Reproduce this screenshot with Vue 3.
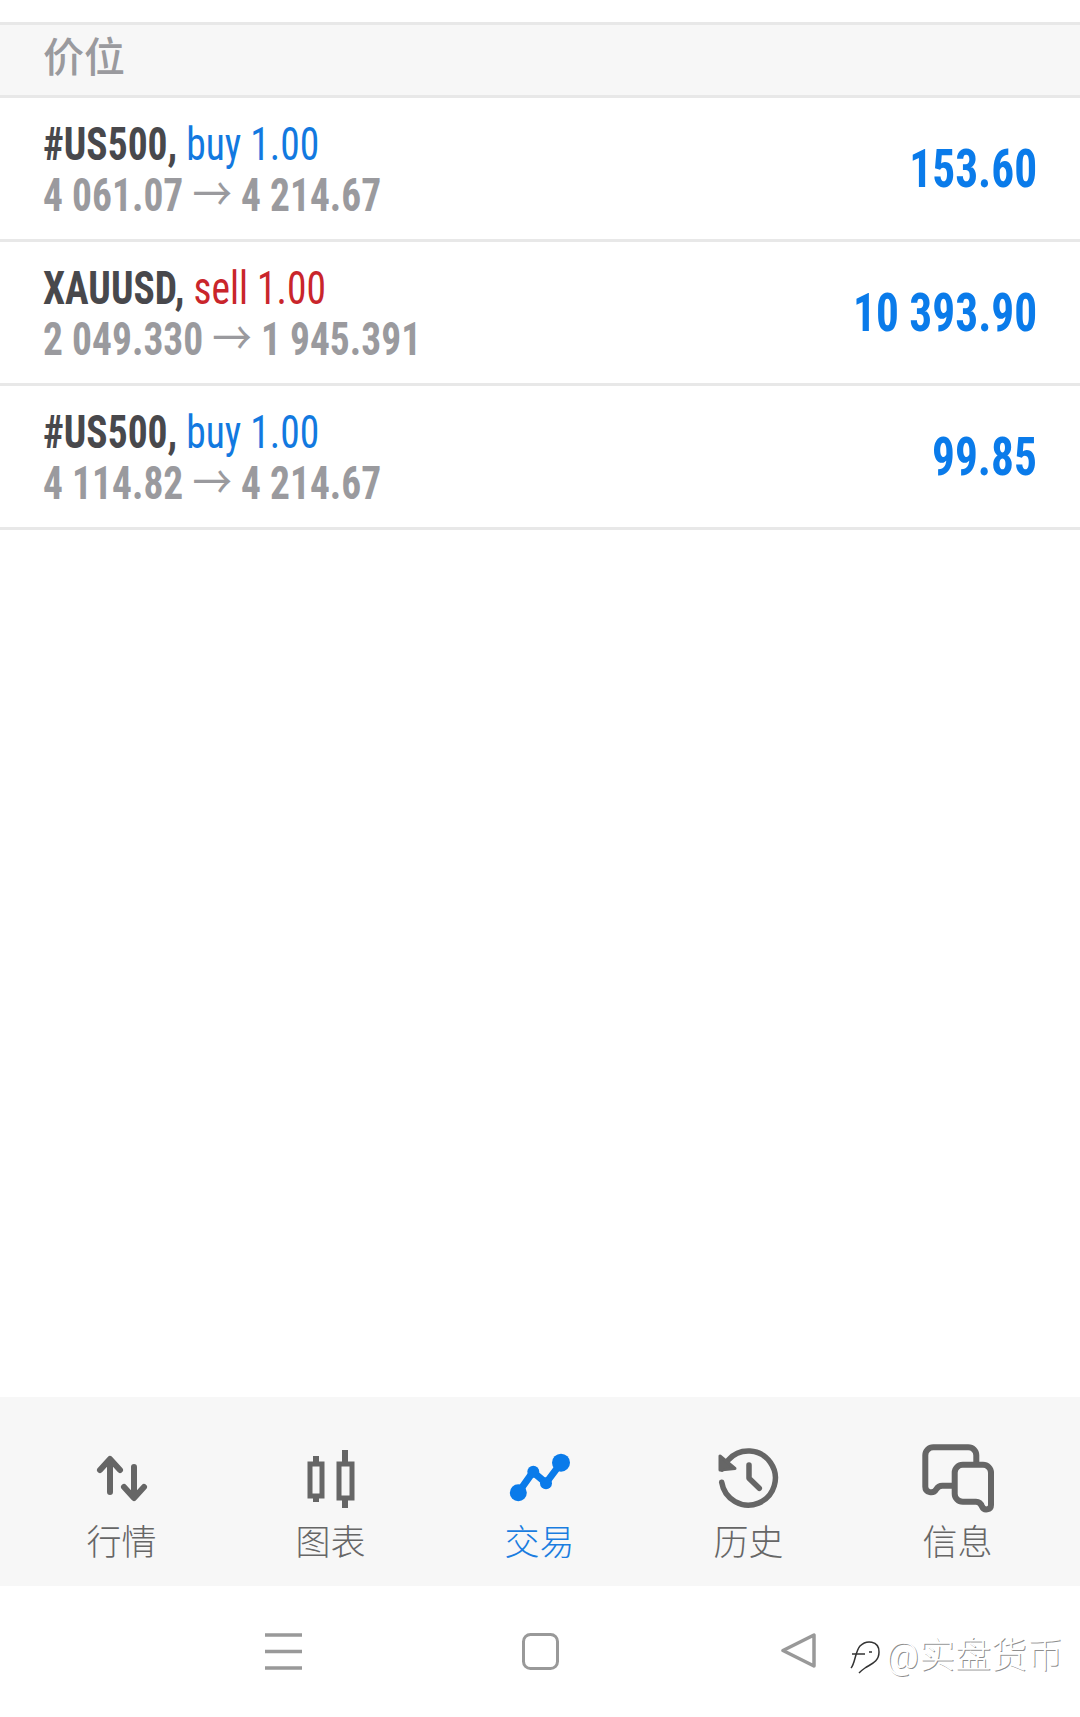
<template>
  <div class="screen">
    <div class="header">价位</div>
    <div class="list">
      <div v-for="(t, i) in trades" :key="i" class="row">
        <div class="info">
          <div class="title"><b>{{ t.symbol }},</b> <span :class="t.side">{{ t.side }} {{ t.volume }}</span></div>
          <div class="prices">{{ t.open }} <span class="arrow">→</span> {{ t.close }}</div>
        </div>
        <div class="profit">{{ t.profit }}</div>
      </div>
    </div>

    <div class="tabs">
      <div v-for="tab in tabs" :key="tab.label" class="tab" :class="{ active: tab.active }">
        <svg v-if="tab.id === 'quotes'" class="icon" viewBox="0 0 100 80" fill="none" stroke="#666" stroke-width="6" stroke-linecap="round" stroke-linejoin="round">
          <path d="M38 52V20M28 30l10-11 10 11" />
          <path d="M62 27V57M52 47l10 11 10-11" />
        </svg>
        <svg v-else-if="tab.id === 'charts'" class="icon" viewBox="0 0 100 80" fill="#666">
          <rect x="32" y="16" width="6" height="46" />
          <rect x="61" y="10" width="6" height="58" />
          <rect x="29" y="24" width="12" height="32" fill="#f7f7f7" stroke="#666" stroke-width="5" />
          <rect x="58" y="24" width="13" height="34" fill="#f7f7f7" stroke="#666" stroke-width="5" />
          <rect x="33" y="27" width="4" height="26" fill="#f7f7f7" />
        </svg>
        <svg v-else-if="tab.id === 'trade'" class="icon" viewBox="-8 0 100 80" fill="#0a7bea">
          <path d="M20 53L35 32L48 43L63 23" fill="none" stroke="#0a7bea" stroke-width="7" />
          <circle cx="20.3" cy="52.7" r="8.5" />
          <circle cx="35.3" cy="31.7" r="6" />
          <circle cx="48" cy="43.3" r="6" />
          <circle cx="63" cy="22.7" r="9" />
        </svg>
        <svg v-else-if="tab.id === 'history'" class="icon" viewBox="-4 0 100 80" fill="none" stroke="#666" stroke-width="5.5" stroke-linecap="round" stroke-linejoin="round">
          <path d="M18.7 42.3A27 27 0 1 0 25.3 20L19 29" />
          <path d="M17 16V30L32 28.5Z" fill="#666" stroke-width="3" />
          <path d="M46 25V38.3L56.3 48.3" />
        </svg>
        <svg v-else class="icon" viewBox="4 0 100 80" fill="none" stroke="#666" stroke-width="6" stroke-linecap="round" stroke-linejoin="round">
          <path d="M72.3 23V15.3a8 8 0 0 0-8-8H29.3a8 8 0 0 0-8 8V46.7c0 6 8 7.500 11 2.500c1.500-2.500 3-3.500 6-3.500H49.300" />
          <path d="M58.7 24.700H79a8 8 0 0 1 8 8V65c0 5-7 6-9 1.500c-1-3-2.500-4.800-6-4.800H58.700a8 8 0 0 1-8-8V32.700a8 8 0 0 1 8-8Z" />
        </svg>
        <span class="label">{{ tab.label }}</span>
      </div>
    </div>

    <div class="nav">
      <svg class="nav-menu" width="37" height="37" viewBox="0 0 37 37" stroke="#999" stroke-width="3.500">
        <path d="M0 2H37M0 18.500H37M0 35H37" />
      </svg>
      <svg class="nav-home" width="37" height="37" viewBox="0 0 37 37" fill="none" stroke="#999" stroke-width="3">
        <rect x="1.500" y="1.500" width="34" height="34" rx="7" />
      </svg>
      <svg class="nav-back" width="36" height="36" viewBox="0 0 36 36" fill="none" stroke="#999" stroke-width="3.500" stroke-linejoin="round">
        <path d="M33 2V33L2 17.500Z" />
      </svg>
      <div class="mark">
        <svg width="36" height="36" viewBox="0 0 36 36" fill="none" stroke="#333" stroke-width="1.500">
          <path d="M6 30C10 26 10 14 15 8C21 2 34 2 34 14C34 24 26 26 20 30C17 32 15 34 14 35" />
          <path d="M7 16H20M24 14H27" />
        </svg>
        <span>@实盘货币</span>
      </div>
    </div>
  </div>
</template>

<script setup>
const trades = [
  { symbol: '#US500', side: 'buy', volume: '1.00', open: '4 061.07', close: '4 214.67', profit: '153.60' },
  { symbol: 'XAUUSD', side: 'sell', volume: '1.00', open: '2 049.330', close: '1 945.391', profit: '10 393.90' },
  { symbol: '#US500', side: 'buy', volume: '1.00', open: '4 114.82', close: '4 214.67', profit: '99.85' }
];

const tabs = [
  { id: 'quotes', label: '行情' },
  { id: 'charts', label: '图表' },
  { id: 'trade', label: '交易', active: true },
  { id: 'history', label: '历史' },
  { id: 'messages', label: '信息' }
];
</script>

<style>
body {
  background: #fff;
}
</style>

<style scoped>
.screen {
  width: 1080px;
  height: 1717px;
  display: flex;
  flex-direction: column;
  overflow: hidden;
  background: #fff;
  font-family: Roboto, "Noto Sans CJK SC", sans-serif;
}
.header {
  margin-top: 22px;
  height: 70px;
  padding-left: 43px;
  line-height: 66px;
  font-size: 41px;
  font-weight: 500;
  color: #9a9a9e;
  background: #f7f7f7;
  border-top: 3px solid #e8e8e8;
  border-bottom: 3px solid #e8e8e8;
}
.list {
  flex: 1;
}
.row {
  height: 141px;
  padding: 16px 43px 0;
  display: flex;
  justify-content: space-between;
  align-items: center;
  box-sizing: content-box;
  height: 125px;
  border-bottom: 3px solid #e8e8e8;
  font-stretch: condensed;
}
.info {
  transform: scaleX(0.84);
  transform-origin: left center;
  white-space: nowrap;
  margin-top: -16px;
}
.title,
.prices {
  font-size: 47px;
  line-height: 51px;
}
.title b {
  font-weight: 700;
  color: #48484c;
}
.buy {
  color: #1279e0;
}
.sell {
  color: #c9252b;
}
.prices {
  font-weight: 700;
  color: #9a9a9e;
}
.arrow {
  font-weight: 400;
}
.profit {
  margin-top: -16px;
  font-size: 54px;
  font-weight: 700;
  color: #0a7bea;
  white-space: nowrap;
  transform: scaleX(0.84);
  transform-origin: right center;
}
.tabs {
  height: 189px;
  padding: 43px 17px 0;
  box-sizing: border-box;
  display: grid;
  grid-template-columns: repeat(5, 209px);
  background: #f7f7f7;
}
.tab {
  display: flex;
  flex-direction: column;
  align-items: center;
  color: #666;
}
.tab.active {
  color: #1a7de0;
}
.icon {
  width: 100px;
  height: 80px;
  overflow: visible;
}
.label {
  margin-top: 4px;
  font-size: 35px;
  line-height: 40px;
  font-weight: 300;
}
.nav {
  position: relative;
  height: 131px;
  padding: 47px 0 0 265px;
  box-sizing: border-box;
  display: flex;
  align-items: flex-start;
}
.nav-home {
  margin-left: 220px;
}
.nav-back {
  margin-left: 222px;
}
.mark {
  position: absolute;
  left: 845px;
  top: 52px;
  display: flex;
  align-items: center;
  gap: 5px;
  font-size: 36px;
  line-height: 36px;
  font-weight: 300;
  color: #fff;
  text-shadow: 1px 1px 0 rgba(0, 0, 0, 0.45);
  white-space: nowrap;
}
</style>
